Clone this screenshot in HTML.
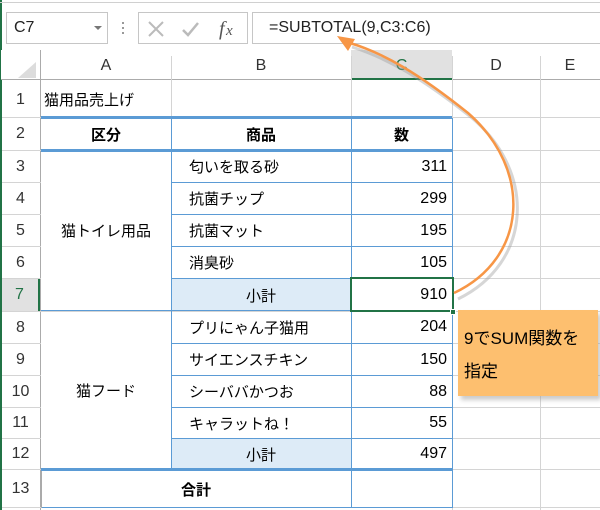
<!DOCTYPE html>
<html><head><meta charset="utf-8"><style>
*{margin:0;padding:0;box-sizing:border-box}
body{width:600px;height:510px;overflow:hidden;background:#fff;position:relative;font-family:"Liberation Sans","Noto Sans CJK JP",sans-serif;font-size:15px;color:#000}
.a{position:absolute}
.c{position:absolute;display:flex;align-items:center;white-space:nowrap}
.hl{position:absolute;height:1px;background:#d4d4d4}
.vl{position:absolute;width:1px;background:#d4d4d4}
.bh{position:absolute;height:1px;background:#5b9bd5}
.bv{position:absolute;width:1px;background:#5b9bd5}
.rh{position:absolute;left:1px;width:39px;display:flex;align-items:center;justify-content:center;color:#333;font-size:16px;background:#fff}
</style></head><body>
<div class="a" style="left:0;top:0;width:2px;height:510px;background:#217346"></div>
<div class="a" style="left:0;top:2px;width:600px;height:1px;background:#d0d0d0"></div>
<div class="a" style="left:6px;top:12px;width:102px;height:32px;border:1px solid #c6c6c6"></div>
<div class="c" style="left:14px;top:12px;height:32px;font-size:16px;color:#222">C7</div>
<div class="a" style="left:94px;top:26px;border-left:4px solid transparent;border-right:4px solid transparent;border-top:4px solid #777"></div>
<div class="a" style="left:122px;top:22px;width:2px;height:2px;background:#999;box-shadow:0 5px #999,0 10px #999"></div>
<div class="a" style="left:138px;top:12px;width:110px;height:32px;border:1px solid #c6c6c6"></div>
<svg class="a" style="left:145px;top:18px" width="100" height="22">
<path d="M4 4L18 18M18 4L4 18" stroke="#bbb" stroke-width="2" fill="none"/>
<path d="M38 12l5 5l10-12" stroke="#bbb" stroke-width="2.5" fill="none"/>
<text x="74" y="17" font-family="Liberation Serif,serif" font-style="italic" font-size="20" fill="#555">f</text><text x="81" y="17" font-family="Liberation Serif,serif" font-style="italic" font-size="15" fill="#555">x</text>
</svg>
<div class="a" style="left:252px;top:12px;width:350px;height:32px;border:1px solid #c6c6c6"></div>
<div class="c" style="left:269px;top:12px;height:32px;font-size:16px;color:#222">=SUBTOTAL(9,C3:C6)</div>
<div class="a" style="left:1px;top:50px;width:599px;height:30px;background:#fff;border-bottom:1px solid #ababab"></div>
<div class="a" style="left:351px;top:50px;width:101px;height:30px;background:#e1e1e1;border-bottom:2px solid #217346"></div>
<svg class="a" style="left:16px;top:62px" width="20" height="16"><path d="M20 0L20 16L2 16Z" fill="#dcdcdc"/></svg>
<div class="vl" style="left:40px;top:50px;height:460px;background:#ababab"></div>
<div class="vl" style="left:171px;top:56px;height:24px"></div>
<div class="vl" style="left:351px;top:56px;height:24px"></div>
<div class="vl" style="left:452px;top:56px;height:24px"></div>
<div class="vl" style="left:540px;top:56px;height:24px"></div>
<div class="c" style="left:41px;top:52px;width:130px;height:28px;justify-content:center;font-size:16px;color:#333">A</div>
<div class="c" style="left:171px;top:52px;width:180px;height:28px;justify-content:center;font-size:16px;color:#333">B</div>
<div class="c" style="left:351px;top:52px;width:101px;height:28px;justify-content:center;font-size:16px;color:#217346">C</div>
<div class="c" style="left:452px;top:52px;width:88px;height:28px;justify-content:center;font-size:16px;color:#333">D</div>
<div class="c" style="left:540px;top:52px;width:60px;height:28px;justify-content:center;font-size:16px;color:#333">E</div>
<div class="vl" style="left:171px;top:80px;height:38px"></div>
<div class="vl" style="left:351px;top:80px;height:38px"></div>
<div class="vl" style="left:452px;top:80px;height:430px"></div>
<div class="vl" style="left:540px;top:80px;height:430px"></div>
<div class="hl" style="left:0;top:117px;width:600px"></div>
<div class="hl" style="left:0;top:150px;width:600px"></div>
<div class="hl" style="left:0;top:182px;width:600px"></div>
<div class="hl" style="left:0;top:214px;width:600px"></div>
<div class="hl" style="left:0;top:246px;width:600px"></div>
<div class="hl" style="left:0;top:278px;width:600px"></div>
<div class="hl" style="left:0;top:311px;width:600px"></div>
<div class="hl" style="left:0;top:343px;width:600px"></div>
<div class="hl" style="left:0;top:375px;width:600px"></div>
<div class="hl" style="left:0;top:407px;width:600px"></div>
<div class="hl" style="left:0;top:438px;width:600px"></div>
<div class="hl" style="left:0;top:469px;width:600px"></div>
<div class="hl" style="left:0;top:507px;width:600px"></div>
<div class="a" style="left:41px;top:152px;width:130px;height:158px;background:#fff"></div>
<div class="a" style="left:41px;top:312px;width:130px;height:157px;background:#fff"></div>
<div class="a" style="left:41px;top:472px;width:310px;height:35px;background:#fff"></div>
<div class="a" style="left:171px;top:278px;width:180px;height:33px;background:#ddebf7"></div>
<div class="a" style="left:171px;top:438px;width:180px;height:31px;background:#ddebf7"></div>
<div class="rh" style="top:82px;height:35px">1</div>
<div class="rh" style="top:118px;height:32px">2</div>
<div class="rh" style="top:151px;height:31px">3</div>
<div class="rh" style="top:183px;height:31px">4</div>
<div class="rh" style="top:215px;height:31px">5</div>
<div class="rh" style="top:247px;height:31px">6</div>
<div class="rh" style="top:279px;height:32px;background:#e1e1e1;color:#217346;border-right:2px solid #217346;width:39px">7</div>
<div class="rh" style="top:312px;height:31px">8</div>
<div class="rh" style="top:344px;height:31px">9</div>
<div class="rh" style="top:376px;height:31px">10</div>
<div class="rh" style="top:408px;height:30px">11</div>
<div class="rh" style="top:439px;height:30px">12</div>
<div class="rh" style="top:470px;height:37px">13</div>
<div class="a" style="left:0;top:80px;width:2px;height:430px;background:#217346"></div>
<div class="a" style="left:41px;top:116px;width:411px;height:3px;background:#5b9bd5"></div>
<div class="a" style="left:41px;top:149px;width:411px;height:3px;background:#5b9bd5"></div>
<div class="a" style="left:41px;top:468px;width:411px;height:3px;background:#5b9bd5"></div>
<div class="bh" style="left:41px;top:507px;width:411px"></div>
<div class="bh" style="left:41px;top:310px;width:411px"></div>
<div class="bh" style="left:171px;top:182px;width:281px"></div>
<div class="bh" style="left:171px;top:214px;width:281px"></div>
<div class="bh" style="left:171px;top:246px;width:281px"></div>
<div class="bh" style="left:171px;top:278px;width:281px"></div>
<div class="bh" style="left:171px;top:343px;width:281px"></div>
<div class="bh" style="left:171px;top:375px;width:281px"></div>
<div class="bh" style="left:171px;top:407px;width:281px"></div>
<div class="bh" style="left:171px;top:438px;width:281px"></div>
<div class="bv" style="left:171px;top:118px;height:352px"></div>
<div class="bv" style="left:351px;top:118px;height:390px"></div>
<div class="bv" style="left:452px;top:118px;height:390px"></div>
<div class="bv" style="left:41px;top:471px;height:37px;background:#aaa"></div>
<div class="a" style="left:350px;top:277px;width:104px;height:35px;border:2px solid #217346"></div>
<div class="a" style="left:450px;top:309px;width:6px;height:6px;background:#217346;border:1px solid #fff"></div>
<div class="c" style="left:44px;top:82px;height:35px">猫用品売上げ</div>
<div class="c" style="left:41px;top:119px;width:130px;height:31px;justify-content:center;font-weight:bold">区分</div>
<div class="c" style="left:171px;top:119px;width:180px;height:31px;justify-content:center;font-weight:bold">商品</div>
<div class="c" style="left:351px;top:119px;width:101px;height:31px;justify-content:center;font-weight:bold">数</div>
<div class="c" style="left:41px;top:151px;width:130px;height:159px;justify-content:center">猫トイレ用品</div>
<div class="c" style="left:41px;top:311px;width:130px;height:158px;justify-content:center">猫フード</div>
<div class="c" style="left:41px;top:471px;width:310px;height:36px;justify-content:center;font-weight:bold">合計</div>
<div class="c" style="left:189px;top:151px;height:31px">匂いを取る砂</div>
<div class="c" style="left:189px;top:183px;height:31px">抗菌チップ</div>
<div class="c" style="left:189px;top:215px;height:31px">抗菌マット</div>
<div class="c" style="left:189px;top:247px;height:31px">消臭砂</div>
<div class="c" style="left:171px;top:279px;width:180px;height:32px;justify-content:center">小計</div>
<div class="c" style="left:189px;top:311px;height:32px">プリにゃん子猫用</div>
<div class="c" style="left:189px;top:344px;height:31px">サイエンスチキン</div>
<div class="c" style="left:189px;top:376px;height:31px">シーババかつお</div>
<div class="c" style="left:189px;top:408px;height:30px">キャラットね！</div>
<div class="c" style="left:171px;top:439px;width:180px;height:30px;justify-content:center">小計</div>
<div class="c" style="left:351px;top:151px;width:96px;height:31px;justify-content:flex-end;font-size:16px">311</div>
<div class="c" style="left:351px;top:183px;width:96px;height:31px;justify-content:flex-end;font-size:16px">299</div>
<div class="c" style="left:351px;top:215px;width:96px;height:31px;justify-content:flex-end;font-size:16px">195</div>
<div class="c" style="left:351px;top:247px;width:96px;height:31px;justify-content:flex-end;font-size:16px">105</div>
<div class="c" style="left:351px;top:279px;width:96px;height:32px;justify-content:flex-end;font-size:16px">910</div>
<div class="c" style="left:351px;top:311px;width:96px;height:32px;justify-content:flex-end;font-size:16px">204</div>
<div class="c" style="left:351px;top:344px;width:96px;height:31px;justify-content:flex-end;font-size:16px">150</div>
<div class="c" style="left:351px;top:376px;width:96px;height:31px;justify-content:flex-end;font-size:16px">88</div>
<div class="c" style="left:351px;top:408px;width:96px;height:30px;justify-content:flex-end;font-size:16px">55</div>
<div class="c" style="left:351px;top:439px;width:96px;height:30px;justify-content:flex-end;font-size:16px">497</div>
<div class="a" style="left:461px;top:314px;width:140px;height:86px;background:#999;opacity:.5;filter:blur(2px)"></div>
<div class="a" style="left:458px;top:310px;width:140px;height:86px;background:#fdbf6f"></div>
<div class="a" style="left:464px;top:322px;font-size:17px;line-height:33px">9でSUM関数を<br>指定</div>
<svg class="a" style="left:0;top:0" width="600" height="510">
<path d="M456 296 C530 260 535 170 470 115 C420 75 385 55 350 44" stroke="#999" stroke-width="3" fill="none" opacity=".4" transform="translate(2,3)"/>
<path d="M454 293 C528 258 533 170 468 113 C418 73 383 53 350 43" stroke="#f79646" stroke-width="2.5" fill="none"/>
<path d="M337 36 L355 39 L348 51 Z" fill="#f79646"/>
</svg>
</body></html>
